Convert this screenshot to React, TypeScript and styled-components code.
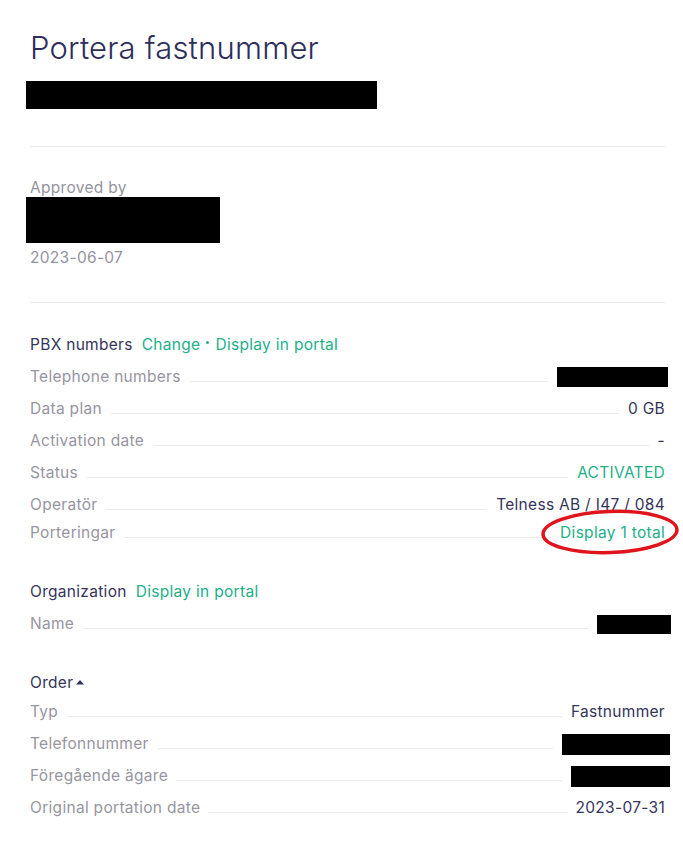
import React from "react";
import styled, { createGlobalStyle } from "styled-components";

const GlobalStyle = createGlobalStyle`
  html, body { margin: 0; padding: 0; background: #ffffff; }
  body { font-family: Inter, "Noto Sans", "Liberation Sans", sans-serif; -webkit-font-smoothing: antialiased; }
`;

const Page = styled.main`
  padding: 30px 18px 40px 30px;
  color: #35345a;
`;

const Title = styled.h1`
  margin: 0 0 -1px;
  font-size: 31px;
  line-height: 36px;
  font-weight: 300;
  color: #2e2d5c;
  letter-spacing: 0.2px;
`;

const Redacted = styled.div<{ $w: number; $h: number }>`
  width: ${(p) => p.$w}px;
  height: ${(p) => p.$h}px;
  background: #000;
  flex: none;
`;

const TitleRedact = styled(Redacted)`
  margin: 16px 0 0 -4px;
`;

const Divider = styled.hr<{ $top: number }>`
  border: 0;
  height: 1px;
  background: #e7e7ec;
  margin: ${(p) => p.$top}px 0 0;
`;

const Meta = styled.section`
  margin-top: 31px;
  display: flex;
  flex-direction: column;
`;

const MetaLabel = styled.div`
  font-size: 15.5px;
  letter-spacing: 0.3px;
  line-height: 20px;
  color: #95939f;
`;

const MetaRedact = styled(Redacted)`
  margin: -1px 0 0 -4px;
`;

const MetaDate = styled.div`
  margin-top: 5px;
  font-size: 15.5px;
  letter-spacing: 0.3px;
  line-height: 20px;
  color: #95939f;
`;

const Section = styled.section<{ $top: number }>`
  margin-top: ${(p) => p.$top}px;
  display: flex;
  flex-direction: column;
`;

const SectionHead = styled.div<{ $h: number }>`
  display: flex;
  align-items: center;
  gap: 9px;
  height: ${(p) => p.$h}px;
  font-size: 15.5px;
  letter-spacing: 0.3px;
  color: #35345a;
`;

const Links = styled.span`
  display: inline-flex;
  align-items: center;
  color: #22b089;
`;

const Dot = styled.span`
  display: inline-block;
  width: 3px;
  height: 3px;
  border-radius: 50%;
  background: #22b089;
  margin: 0 6px;
  position: relative;
  top: -2px;
`;

const Caret = styled.svg`
  width: 8px;
  height: 6px;
  margin-left: -6px;
  position: relative;
  top: -1px;
`;

const Row = styled.div<{ $h: number }>`
  display: flex;
  align-items: baseline;
  height: ${(p) => p.$h}px;
  line-height: ${(p) => p.$h}px;
  font-size: 15.5px;
  letter-spacing: 0.3px;
`;

const Label = styled.span`
  color: #97959f;
  white-space: nowrap;
`;

const Leader = styled.span`
  flex: 1;
  height: 1px;
  background: #ebebef;
  margin: 0 9px;
`;

const Value = styled.span<{ $tone?: "dark" | "green" }>`
  position: relative;
  white-space: nowrap;
  color: ${(p) => (p.$tone === "green" ? "#22b089" : "#35345a")};
`;

const ValueRedact = styled(Redacted)<{ $shift: number }>`
  align-self: center;
  margin-right: ${(p) => -p.$shift}px;
`;

const Annotation = styled.svg`
  position: absolute;
  left: -20px;
  top: -12px;
  width: 140px;
  height: 46px;
  overflow: visible;
  pointer-events: none;
`;

type RowData = {
  label: string;
  value?: string;
  tone?: "dark" | "green";
  redact?: [number, number, number];
  h?: number;
  circled?: boolean;
};

const pbxRows: RowData[] = [
  { label: "Telephone numbers", redact: [111, 20, 3] },
  { label: "Data plan", value: "0 GB" },
  { label: "Activation date", value: "-" },
  { label: "Status", value: "ACTIVATED", tone: "green" },
  { label: "Operatör", value: "Telness AB / I47 / 084" },
  { label: "Porteringar", value: "Display 1 total", tone: "green", h: 24, circled: true },
];

const orgRows: RowData[] = [{ label: "Name", redact: [74, 19, 6] }];

const orderRows: RowData[] = [
  { label: "Typ", value: "Fastnummer" },
  { label: "Telefonnummer", redact: [108, 21, 5] },
  { label: "Föregående ägare", redact: [99, 21, 5] },
  { label: "Original portation date", value: "2023-07-31" },
];

function DataRow({ row }: { row: RowData }) {
  return (
    <Row $h={row.h ?? 32}>
      <Label>{row.label}</Label>
      <Leader />
      {row.redact ? (
        <ValueRedact $w={row.redact[0]} $h={row.redact[1]} $shift={row.redact[2]} />
      ) : (
        <Value $tone={row.tone}>
          {row.value}
          {row.circled && (
            <Annotation viewBox="0 0 140 46">
              <ellipse
                cx="70"
                cy="23"
                rx="67"
                ry="20.5"
                fill="none"
                stroke="#e0141c"
                strokeWidth="3.5"
                transform="rotate(-2 70 23)"
              />
            </Annotation>
          )}
        </Value>
      )}
    </Row>
  );
}

export default function App() {
  return (
    <>
      <GlobalStyle />
      <Page>
        <Title>Portera fastnummer</Title>
        <TitleRedact $w={351} $h={28} />
        <Divider $top={37} />
        <Meta>
          <MetaLabel>Approved by</MetaLabel>
          <MetaRedact $w={194} $h={46} />
          <MetaDate>2023-06-07</MetaDate>
        </Meta>
        <Divider $top={34} />

        <Section $top={25}>
          <SectionHead $h={33}>
            PBX numbers
            <Links>
              Change
              <Dot />
              Display in portal
            </Links>
          </SectionHead>
          {pbxRows.map((r) => (
            <DataRow key={r.label} row={r} />
          ))}
        </Section>

        <Section $top={30}>
          <SectionHead $h={33}>
            Organization
            <Links>Display in portal</Links>
          </SectionHead>
          {orgRows.map((r) => (
            <DataRow key={r.label} row={r} />
          ))}
        </Section>

        <Section $top={29}>
          <SectionHead $h={27}>
            Order
            <Caret viewBox="0 0 8 6">
              <path d="M0 5.5 L4 1 L8 5.5 Z" fill="#35345a" />
            </Caret>
          </SectionHead>
          {orderRows.map((r) => (
            <DataRow key={r.label} row={r} />
          ))}
        </Section>
      </Page>
    </>
  );
}
